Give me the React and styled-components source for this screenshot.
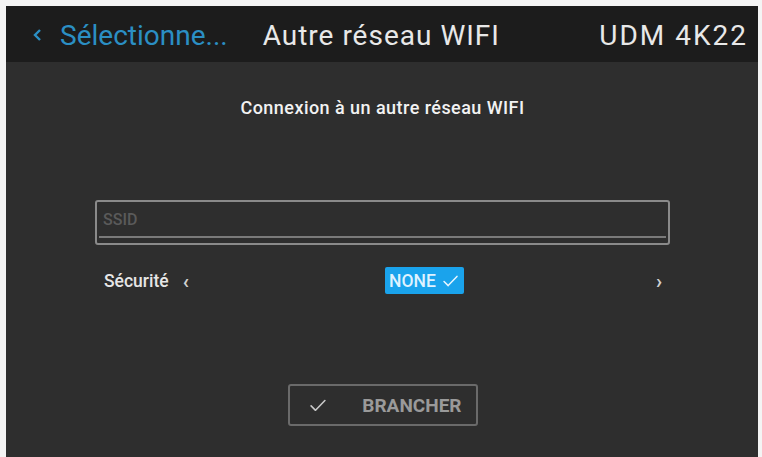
import React from 'react'
import styled, { createGlobalStyle } from 'styled-components'

const Global = createGlobalStyle`
  html, body { margin:0; padding:0; background:#f4f4f4; }
  body { font-family: Roboto, "Liberation Sans", sans-serif; }
`

const Screen = styled.div`
  margin:6px 4px 0 6px;
  height:451px;
  background:#2e2e2e;
  display:flex;
  flex-direction:column;
`

const TopBar = styled.div`
  height:56px;
  background:#1c1c1c;
  display:flex;
  align-items:center;
  padding:2px 10px 0 27px;
  box-sizing:border-box;
  font-size:28px;
  color:#e8e8e8;
`

const Back = styled.div`
  display:flex;
  align-items:center;
  gap:18px;
  color:#2b8fc4;
  margin-right:35px;
`

const Title = styled.div`
  flex:1;
  letter-spacing:1px;
`

const Device = styled.span`
  letter-spacing:2px;
`

const Content = styled.div`
  flex:1;
  display:flex;
  flex-direction:column;
  align-items:center;
  padding:0 88px 0 89px;
`

const Heading = styled.div`
  margin-top:35px;
  font-size:18px;
  font-weight:500;
  letter-spacing:0.45px;
  color:#f2f2f2;
`

const Field = styled.div`
  align-self:stretch;
  margin-top:82px;
  height:45px;
  box-sizing:border-box;
  border:2px solid #8a8a8a;
  border-radius:3px;
  position:relative;
  display:flex;
  align-items:center;
  padding:0 6px 6px;
  color:#5a5a5a;
  font-size:16px;
  font-weight:500;
  &::after{
    content:'';
    position:absolute;
    left:2px; right:2px; bottom:5px;
    height:2px;
    background:#7a7a7a;
  }
`

const Row = styled.div`
  align-self:stretch;
  margin-top:22px;
  display:flex;
  align-items:center;
  padding:0 8px 0 9px;
  color:#e6e6e6;
  font-size:17.5px;
`

const Label = styled.span`
  font-weight:500;
`

const Arrow = styled.span`
  font-size:20px;
  font-weight:700;
  margin-left:${p => p.$ml || 0}px;
  color:#d0d0d0;
`

const Spacer = styled.div`
  flex:1;
  display:flex;
  justify-content:center;
`

const Pill = styled.div`
  background:#1aa3ec;
  border-radius:2px;
  height:27px;
  padding:0 6px 0 4px;
  display:flex;
  align-items:center;
  gap:7px;
  color:#dff2ff;
  font-weight:500;
  font-size:17.5px;
  margin-left:4px;
`

const Button = styled.div`
  margin-top:90px;
  width:190px;
  height:42px;
  border:2px solid #6a6a6a;
  border-radius:3px;
  display:flex;
  align-items:center;
  padding:0 14px 0 20px;
  box-sizing:border-box;
  color:#9a9a9a;
  font-size:19px;
  font-weight:700;
  justify-content:space-between;
`

const Check = ({ size = 14, color = '#cfcfcf', w = 1.8 }) => (
  <svg width={size} height={size * 0.8} viewBox="0 0 16 13">
    <path d="M1 7 L5.5 11.5 L15 1.5" fill="none" stroke={color} strokeWidth={w} strokeLinecap="round" strokeLinejoin="round" />
  </svg>
)

export default function App() {
  return (
    <>
      <Global />
      <Screen>
        <TopBar>
          <Back>
            <svg width="9" height="14" viewBox="0 0 9 14">
              <path d="M7 2 L2 7 L7 12" fill="none" stroke="#2b8fc4" strokeWidth="2.4" />
            </svg>
            <span>Sélectionne...</span>
          </Back>
          <Title>Autre réseau WIFI</Title>
          <Device>UDM 4K22</Device>
        </TopBar>
        <Content>
          <Heading>Connexion à un autre réseau WIFI</Heading>
          <Field>SSID</Field>
          <Row>
            <Label>Sécurité</Label>
            <Arrow $ml={14}>‹</Arrow>
            <Spacer>
              <Pill>NONE <Check size={15} color="#e8f6ff" w={1.6} /></Pill>
            </Spacer>
            <Arrow>›</Arrow>
          </Row>
          <Button>
            <Check size={16} color="#c8c8c8" w={1.6} />
            <span>BRANCHER</span>
          </Button>
        </Content>
      </Screen>
    </>
  )
}
